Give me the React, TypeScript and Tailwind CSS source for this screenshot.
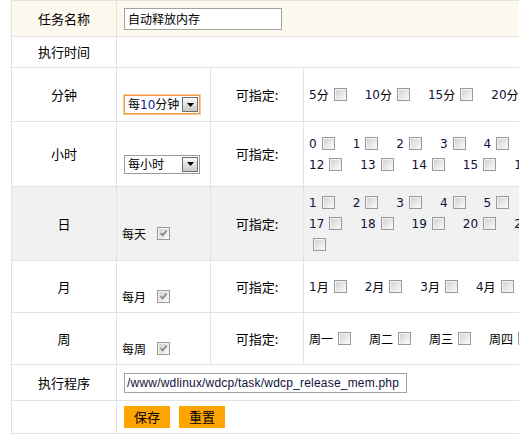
import React from "react";

const CJK = "font-['Noto_Sans_CJK_SC','Noto_Sans_CJK_JP',sans-serif]";
const NUM = "font-['DejaVu_Sans','Noto_Sans_CJK_SC',sans-serif]";

function CB({ checked, className = "" }: { checked?: boolean; className?: string }) {
  return (
    <span
      className={`relative inline-block h-[13px] w-[13px] shrink-0 border border-[#9a9a9a] bg-linear-to-br from-[#cdcdcd] via-[#e6e6e6] to-[#fcfcfc] shadow-[inset_1px_1px_0_#f4f4f4] ${className}`}
    >
      {checked && (
        <svg className="absolute left-[1px] top-[1px]" width="9" height="9" viewBox="0 0 9 9">
          <path d="M1.5 4.2 L3.6 6.4 L7.6 1.6" fill="none" stroke="#8a8a8a" strokeWidth="1.8" />
        </svg>
      )}
    </span>
  );
}

function Opt({ num, suffix }: { num?: string; suffix?: string }) {
  return (
    <span className="flex items-center">
      {num && <span className={`${NUM} text-[12px] text-[#10103a]`}>{num}</span>}
      {suffix && <span className={`${CJK} text-[12px] text-black`}>{suffix}</span>}
      <CB className="ml-[5px] mr-[18px]" />
    </span>
  );
}

function Line({ children }: { children: React.ReactNode }) {
  return <div className="flex h-[21px] items-center whitespace-nowrap">{children}</div>;
}

function Select({ label, focused }: { label: React.ReactNode; focused?: boolean }) {
  return (
    <div
      className={`flex h-[19px] w-[76px] items-center bg-white ${
        focused
          ? "border border-[#f29a4e] shadow-[0_0_0_1px_#fcc992]"
          : "border border-[#9c9c9c]"
      }`}
    >
      <span className={`${CJK} flex-1 pl-[3px] text-[12px] leading-none text-black`}>{label}</span>
      <span className="mr-px flex h-[15px] w-[16px] items-center justify-center border border-[#6f6f6f] bg-linear-to-b from-[#fafafa] to-[#c9c9c9]">
        <svg width="7" height="4" viewBox="0 0 7 4">
          <path d="M0 0 H7 L3.5 4 Z" fill="#000" />
        </svg>
      </span>
    </div>
  );
}

function Label({ text, bg = "bg-white" }: { text: string; bg?: string }) {
  return (
    <div className={`${bg} ${CJK} flex items-center justify-center text-[13px] text-black`}>{text}</div>
  );
}

function Every({ text, bg = "bg-white" }: { text: string; bg?: string }) {
  return (
    <div className={`${bg} flex items-center pl-[5px] pt-[20px]`}>
      <span className={`${CJK} text-[12px] text-black`}>{text}</span>
      <CB checked className="ml-[11px]" />
    </div>
  );
}

export default function App() {
  const hours1 = Array.from({ length: 12 }, (_, i) => String(i));
  const hours2 = Array.from({ length: 12 }, (_, i) => String(i + 12));
  const days1 = Array.from({ length: 16 }, (_, i) => String(i + 1));
  const days2 = Array.from({ length: 14 }, (_, i) => String(i + 17));
  const mins = Array.from({ length: 11 }, (_, i) => String((i + 1) * 5));
  const months = Array.from({ length: 12 }, (_, i) => String(i + 1));
  const weeks = ["周一", "周二", "周三", "周四", "周五", "周六", "周日"];

  return (
    <div className="h-[438px] w-[519px] overflow-hidden bg-white">
      <div className="ml-[11px] grid w-max grid-cols-[104px_93px_92px_760px] grid-rows-[35px_30px_53px_64px_73px_51px_51px_35px_32px] gap-px bg-[#e3e3e3] p-px">
        {/* Row 1 */}
        <Label text="任务名称" bg="bg-[#fdf9ee]" />
        <div className="col-span-3 flex items-center bg-[#fdf9ee] pl-[7px]">
          <div className={`${CJK} flex h-[22px] w-[158px] items-center border border-[#a3a3a3] bg-white pl-[3px] text-[12px] text-black`}>
            自动释放内存
          </div>
        </div>

        {/* Row 2 */}
        <Label text="执行时间" />
        <div className="col-span-3 bg-white" />

        {/* Row 3 分钟 */}
        <Label text="分钟" />
        <div className="flex items-center bg-white pl-[7px] pt-[20px]">
          <Select
            focused
            label={
              <>
                每<span className={`${NUM} text-[12px] text-[#1a1aa0]`}>10</span>分钟
              </>
            }
          />
        </div>
        <Label text="可指定:" />
        <div className="flex flex-col justify-center bg-white pl-[5px]">
          <Line>
            {mins.map((m) => (
              <Opt key={m} num={m} suffix="分" />
            ))}
          </Line>
        </div>

        {/* Row 4 小时 */}
        <Label text="小时" />
        <div className="flex items-center bg-white pl-[7px] pt-[20px]">
          <Select label="每小时" />
        </div>
        <Label text="可指定:" />
        <div className="flex flex-col justify-center bg-white pl-[5px]">
          <Line>
            {hours1.map((h) => (
              <Opt key={h} num={h} />
            ))}
          </Line>
          <Line>
            {hours2.map((h) => (
              <Opt key={h} num={h} />
            ))}
          </Line>
        </div>

        {/* Row 5 日 */}
        <Label text="日" bg="bg-[#f1f1f1]" />
        <Every text="每天" bg="bg-[#f1f1f1]" />
        <Label text="可指定:" bg="bg-[#f1f1f1]" />
        <div className="flex flex-col justify-center bg-[#f1f1f1] pl-[5px]">
          <Line>
            {days1.map((d) => (
              <Opt key={d} num={d} />
            ))}
          </Line>
          <Line>
            {days2.map((d) => (
              <Opt key={d} num={d} />
            ))}
            <span className={`${NUM} text-[12px] text-[#10103a]`}>31</span>
          </Line>
          <Line>
            <CB className="ml-[4px]" />
          </Line>
        </div>

        {/* Row 6 月 */}
        <Label text="月" />
        <Every text="每月" />
        <Label text="可指定:" />
        <div className="flex flex-col justify-center bg-white pl-[5px]">
          <Line>
            {months.map((m) => (
              <Opt key={m} num={m} suffix="月" />
            ))}
          </Line>
        </div>

        {/* Row 7 周 */}
        <Label text="周" />
        <Every text="每周" />
        <Label text="可指定:" />
        <div className="flex flex-col justify-center bg-white pl-[5px]">
          <Line>
            {weeks.map((w) => (
              <Opt key={w} suffix={w} />
            ))}
          </Line>
        </div>

        {/* Row 8 执行程序 */}
        <Label text="执行程序" />
        <div className="col-span-3 flex items-center bg-white pl-[7px]">
          <div className="flex h-[20px] w-[283px] items-center overflow-hidden whitespace-nowrap border border-[#a3a3a3] bg-white pl-[2px] font-['Liberation_Sans',sans-serif] text-[12px] tracking-[0.2px] text-[#10103a]">
            /www/wdlinux/wdcp/task/wdcp_release_mem.php
          </div>
        </div>

        {/* Row 9 buttons */}
        <div className="bg-white" />
        <div className="col-span-3 flex items-center gap-[9px] bg-white pl-[7px]">
          <button className={`${CJK} h-[22px] w-[46px] bg-[#ffa500] text-[13px] text-black`}>保存</button>
          <button className={`${CJK} h-[22px] w-[46px] bg-[#ffa500] text-[13px] text-black`}>重置</button>
        </div>
      </div>
    </div>
  );
}
